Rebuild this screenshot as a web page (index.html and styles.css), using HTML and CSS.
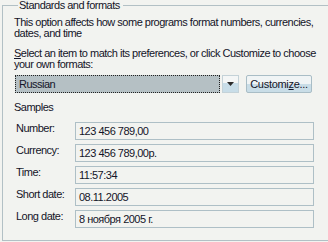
FILE: index.html
```html
<!DOCTYPE html>
<html lang="en">
<head>
    <meta charset="UTF-8">
    <title>Regional Options</title>
    <link rel="stylesheet" href="styles.css">
</head>
<body>
    <fieldset class="group">
        <legend>Standards and formats</legend>

        <p class="intro">This option affects how some programs format numbers, currencies,<br>dates, and time</p>

        <p class="hint"><u>S</u>elect an item to match its preferences, or click Customize to choose<br>your own formats:</p>

        <div class="picker">
            <div class="select">
                <span class="select-value">Russian</span>
                <span class="select-arrow">
                    <svg width="7" height="4" viewBox="0 0 7 4"><path d="M0 0h7L3.5 4z" fill="#2b2b2b"/></svg>
                </span>
            </div>
            <button class="btn">Customi<u>z</u>e...</button>
        </div>

        <div class="samples">
            <div class="samples-title">Samples</div>
            <div class="sample-row">
                <span class="sample-label">Number:</span>
                <span class="sample-value">123 456 789,00</span>
            </div>
            <div class="sample-row">
                <span class="sample-label">Currency:</span>
                <span class="sample-value">123 456 789,00р.</span>
            </div>
            <div class="sample-row">
                <span class="sample-label">Time:</span>
                <span class="sample-value">11:57:34</span>
            </div>
            <div class="sample-row">
                <span class="sample-label">Short date:</span>
                <span class="sample-value">08.11.2005</span>
            </div>
            <div class="sample-row">
                <span class="sample-label">Long date:</span>
                <span class="sample-value">8 ноября 2005 г.</span>
            </div>
        </div>
    </fieldset>
</body>
</html>
```

FILE: styles.css
```css
html, body {
    margin: 0;
    padding: 0;
    background-color: #f2f3f0;
    overflow: hidden;
}

body {
    width: 328px;
    height: 242px;
    font-family: "Liberation Sans", Arial, sans-serif;
    font-size: 11px;
    line-height: 11px;
    letter-spacing: -0.5px;
    color: #141428;
}

.group {
    width: 340px;
    height: 241px;
    box-sizing: border-box;
    margin: 0 0 0 2px;
    padding: 0 0 0 11px;
    border: 1px solid #b2c0c5;
    border-right: none;
    min-width: 0;
}

.group legend {
    padding: 0 3px 0 1px;
    margin-left: 4px;
    line-height: 11px;
}

.intro {
    margin: 6px 0 0 0;
    white-space: nowrap;
}

.hint {
    margin: 9px 0 0 0;
    white-space: nowrap;
}

.picker {
    display: flex;
    align-items: flex-start;
    margin-top: 5px;
    margin-left: 1px;
}

.select {
    display: flex;
    height: 18px;
}

.select-value {
    width: 200px;
    height: 16px;
    line-height: 16px;
    padding-left: 3px;
    background-color: #b5c0c4;
    border: 1px dotted #222;
    margin-right: 2px;
}

.select-arrow {
    width: 15px;
    height: 16px;
    display: flex;
    align-items: center;
    justify-content: center;
    border: 1px solid #c4d2d8;
    background: linear-gradient(#f4f6f6 0, #f4f6f6 45%, #c8dde8 45%, #c8dde8 100%);
}

.btn {
    width: 66px;
    height: 18px;
    margin-left: 7px;
    padding: 0;
    font-family: inherit;
    font-size: 11px;
    line-height: 14px;
    letter-spacing: -0.3px;
    color: #141428;
    border: 1px solid #a9bdc6;
    border-radius: 2px;
    background: linear-gradient(#f0f4f5 0, #f0f4f5 50%, #c9dde7 50%, #c9dde7 100%);
}

.samples-title {
    margin-top: 9px;
    height: 11px;
}

.sample-row {
    display: flex;
    align-items: flex-start;
    height: 18px;
}

.samples-title + .sample-row {
    margin-top: 9px;
}

.sample-row + .sample-row {
    margin-top: 4px;
}

.sample-label {
    width: 59px;
    padding-left: 2px;
    padding-top: 1px;
}

.sample-value {
    width: 234px;
    height: 16px;
    line-height: 17px;
    padding-left: 3px;
    border: 1px solid #aebfc6;
}
```
